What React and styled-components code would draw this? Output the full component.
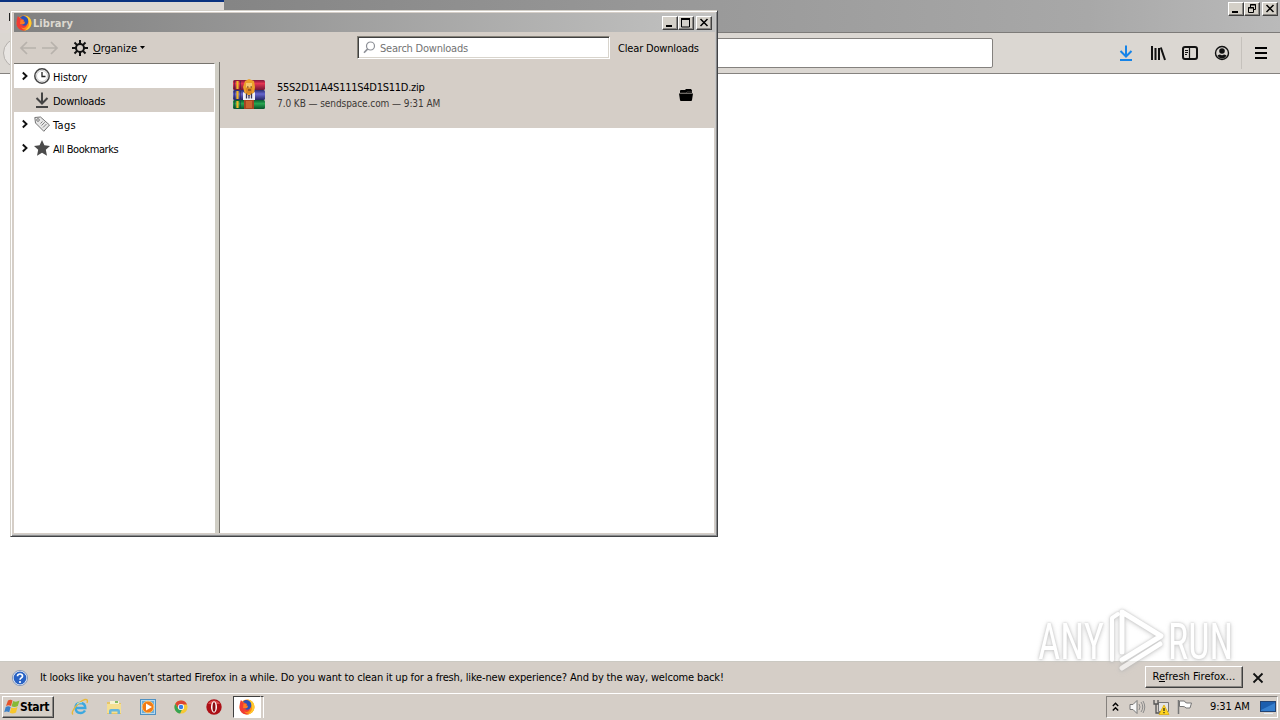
import React from "react";
import styled, { createGlobalStyle } from "styled-components";

const Global = createGlobalStyle`
  * { box-sizing: border-box; }
  body { margin: 0; overflow: hidden; background: #fff; }
  svg { display: block; flex: none; overflow: visible; }
`;

const face = "#d5cec7";

const Desktop = styled.div`
  position: relative;
  width: 1280px;
  height: 720px;
  display: flex;
  flex-direction: column;
  overflow: hidden;
  background: #fff;
  color: #000;
  font: 11px/14px "DejaVu Sans Condensed", "DejaVu Sans", sans-serif;
  font-stretch: condensed;
`;

const Label = styled.span`
  display: block;
  white-space: nowrap;
  padding-top: ${(p) => p.$drop ?? 0}px;
  letter-spacing: ${(p) => p.$ls ?? -0.3}px;
  font-size: ${(p) => p.$size ?? 11}px;
  color: ${(p) => p.$color ?? "#000"};
  font-weight: ${(p) => (p.$bold ? 700 : 400)};
`;

/* ---------- browser chrome ---------- */
const TabStrip = styled.div`
  height: 33px;
  flex: none;
  display: flex;
  justify-content: space-between;
  border-bottom: 1px solid #7d7b79;
  background: linear-gradient(90deg, #858585 18%, #979797 50%, #a8a8a8 85%, #bababa);
`;
const Tab = styled.div`
  width: 224px;
  height: 33px;
  border-top: 2px solid #0a3180;
  background: #dcd7d4;
  padding: 11px 0 0 9px;
`;
const TabMark = styled.div`
  width: 1px;
  height: 8px;
  background: #222;
`;
const Caption = styled.div`
  display: flex;
  padding: ${(p) => p.$pad ?? "0"};
`;
const CaptionButton = styled.div`
  width: 16px;
  height: 14px;
  margin-left: ${(p) => p.$gap ?? 0}px;
  background: #d4d0c8;
  border: 1px solid;
  border-color: #fff #404040 #404040 #fff;
  box-shadow: inset -1px -1px #8b8884;
`;
const NavBar = styled.div`
  height: 41px;
  flex: none;
  display: flex;
  align-items: center;
  border-bottom: 1px solid #85827f;
  background: #dbd7d2;
`;
const BackCircle = styled.div`
  width: 30px;
  height: 30px;
  margin-left: 3px;
  border: 1px solid #b5b1ad;
  border-radius: 50%;
  background: #e8e5e2;
`;
const UrlBar = styled.div`
  width: 760px;
  height: 30px;
  margin-left: 200px;
  background: #fff;
  border: 1px solid #84817e;
  border-radius: 2px;
`;
const NavIcons = styled.div`
  display: flex;
  align-items: center;
  margin-left: 125px;
  gap: 16px;
`;
const NavDivider = styled.div`
  width: 1px;
  height: 32px;
  margin: 0 12px 0 11px;
  background: #c5c1bc;
`;
const Page = styled.div`
  flex: 1;
  background: #fff;
`;
const Notice = styled.div`
  height: 32px;
  flex: none;
  display: flex;
  align-items: center;
  padding-left: 12px;
  background: ${face};
  border-top: 1px solid #cbc9c2;
`;
const NoticeText = styled.div`
  margin-left: 12px;
  width: 1105px;
`;
const RefreshButton = styled.div`
  width: 98px;
  height: 22px;
  margin: -2px 10px 0 0;
  display: flex;
  align-items: center;
  justify-content: center;
  border: 1px solid;
  border-color: #fff #404040 #404040 #fff;
  box-shadow: inset -1px -1px #8b8884;
`;

/* ---------- taskbar ---------- */
const TaskBar = styled.div`
  height: 27px;
  flex: none;
  display: flex;
  align-items: center;
  padding: 0 2px;
  background: ${face};
  border-top: 1px solid #fff;
`;
const StartButton = styled.div`
  width: 52px;
  height: 22px;
  display: flex;
  align-items: center;
  gap: 0;
  padding: 0 0 1px 1px;
  border: 1px solid;
  border-color: #fff #404040 #404040 #fff;
  box-shadow: inset -1px -1px #8b8884;
`;
const QuickLaunch = styled.div`
  display: flex;
  align-items: center;
  gap: 17px;
  margin-left: 17px;
`;
const ActiveTask = styled.div`
  width: 28px;
  height: 22px;
  display: flex;
  align-items: center;
  justify-content: center;
  margin-left: 11px;
  border: 1px solid;
  border-color: #404040 #fff #fff #404040;
  background: #fff;
`;
const TaskStack = styled.div`
  width: 3px;
  height: 22px;
  border-top: 1px solid #404040;
  border-right: 1px solid #fff;
`;
const Tray = styled.div`
  width: 172px;
  height: 22px;
  margin-left: auto;
  display: flex;
  align-items: center;
  padding-left: 5px;
  border: 1px solid;
  border-color: #85817d #fff #fff #85817d;
`;
const TrayItem = styled.div`
  margin-left: ${(p) => p.$gap}px;
  display: flex;
`;

/* ---------- library window ---------- */
const LibraryWindow = styled.div`
  position: absolute;
  left: 10px;
  top: 10px;
  width: 708px;
  height: 527px;
  display: flex;
  flex-direction: column;
  padding: 2px;
  background: ${face};
  border: 1px solid;
  border-color: #d4d0c8 #404246 #404246 #d4d0c8;
  box-shadow: inset 1px 1px #fff, inset -1px -1px #8b8b8b, inset -2px -2px #c8c8c8;
`;
const TitleBar = styled.div`
  height: 19px;
  flex: none;
  display: flex;
  align-items: center;
  padding: 1px 3px 0 2px;
  margin: 0 0 0 1px;
  background: linear-gradient(90deg, #808080, #c2c2c1);
`;
const TitleText = styled.div`
  flex: 1;
  margin-left: 1px;
`;
const LibraryToolbar = styled.div`
  height: 30px;
  flex: none;
  display: flex;
  align-items: center;
  padding: 1px 0 0 7px;
`;
const OrganizeMenu = styled.div`
  display: flex;
  align-items: center;
  width: 277px;
  margin-left: 14px;
`;
const OrganizeText = styled.div`
  width: 44px;
  margin: 0 3px 0 5px;
`;
const SearchBox = styled.div`
  width: 253px;
  height: 23px;
  display: flex;
  align-items: center;
  gap: 4px;
  margin-left: 8px;
  padding-left: 5px;
  background: #fff;
  border: 1px solid;
  border-color: #858178 #fff #fff #858178;
  box-shadow: inset 1px 1px #404040, inset -1px -1px #d8d4cc;
`;
const ClearButton = styled.div`
  margin-left: 8px;
`;
const LibraryBody = styled.div`
  height: 471px;
  display: flex;
  padding: 0 1px 0 1px;
`;
const Sidebar = styled.div`
  width: 201px;
  background: #fff;
  border-top: 1px solid #77746e;
  border-right: 1px solid #fff;
  margin-top: 1px;
`;
const SideRow = styled.div`
  height: 24px;
  display: flex;
  align-items: center;
  padding-left: 8px;
  background: ${(p) => (p.$active ? face : "#fff")};
`;
const Chevron = styled.div`
  width: 12px;
  display: flex;
`;
const SideIcon = styled.div`
  width: 16px;
  margin-right: 3px;
`;
const Splitter = styled.div`
  width: 5px;
  background: #d0cec5;
  border-right: 1px solid #77746e;
`;
const DownloadsPane = styled.div`
  flex: 1;
  background: #fff;
`;
const DownloadRow = styled.div`
  height: 66px;
  display: flex;
  align-items: center;
  padding-left: 13px;
  background: ${face};
`;
const FileInfo = styled.div`
  display: flex;
  flex-direction: column;
  gap: 2px;
  margin: 2px 0 0 12px;
  width: 402px;
  line-height: 14px;
`;
const Watermark = styled.div`
  position: absolute;
  left: 1036px;
  top: 606px;
  filter: drop-shadow(0 0 1px #aaa) drop-shadow(0 1px 2px #bbb);
  opacity: 0.65;
`;

/* ---------- icons ---------- */
const Min = () => (
  <svg width="14" height="12"><rect x="3" y="8" width="6" height="2" /></svg>
);
const Max = () => (
  <svg width="14" height="12" fill="none" stroke="#000"><path d="M2 1.500h9M2.500 1v9h8V1M2 2.500h9" /></svg>
);
const Restore = () => (
  <svg width="14" height="12" fill="none" stroke="#000"><path d="M5.500 4V1.500h5v5H9M5 2h6M3.500 4.500h5v5h-5zM3 5h6" /></svg>
);
const Close = () => (
  <svg width="14" height="12" stroke="#000" strokeWidth="1.500"><path d="M3.500 2l7 7M10.500 2l-7 7" /></svg>
);

const Firefox = ({ size = 16 }) => (
  <svg width={size} height={size} viewBox="0 0 16 16">
    <circle cx="8" cy="8" r="7.500" fill="#ff8a16" />
    <path d="M8 .5c5 0 8 4 7.400 8.500-.8 4-4 6.500-7.400 6.500 4-2 6-5 4.500-9C12 4 10 2 8 .5z" fill="#ffcb2d" />
    <path d="M.7 6C1 3.500 1.500 2 2 1l2 2.500L8 5l-1 3 4 2c-1 3-4 4-6 2 1 2 3 3.500 6 2.500C7 17 1 14.500.6 9z" fill="#f03b35" />
    <path d="M4 3c2-3 6-2.500 8 1 .8 3 0 5.500-2.500 6.500-2.500.7-4.500-1-4.500-2.500l3 .5 1-1.500-2-1L8 5z" fill="#2b50b8" />
    <path d="M4.500 4.500L8 5.200 7 7l2 1-2 1.500L4 9z" fill="#ff7a22" />
  </svg>
);

const Gear = () => (
  <svg width="16" height="16" viewBox="0 0 16 16" fill="none" stroke="#111">
    <circle cx="8" cy="8" r="4" strokeWidth="2" />
    <path strokeWidth="2" d="M8 0v4M8 12v4M0 8h4M12 8h4M2.500 2.500l2.400 2.400M11.100 11.100l2.400 2.400M13.500 2.500l-2.400 2.400M4.900 11.100l-2.400 2.400" />
  </svg>
);

const NavArrow = ({ flip }) => (
  <svg width="16" height="16" viewBox="0 0 16 16" fill="none" stroke="#b7b2ac" strokeWidth="1.700" transform={flip ? "scale(-1,1)" : undefined}>
    <path d="M1 8h15M7 2L1 8l6 6" />
  </svg>
);

const WinRar = () => (
  <svg width="32" height="32" viewBox="0 0 32 32">
    <defs>
      <linearGradient id="r" x2="0" y2="1"><stop stopColor="#7f1639" /><stop offset=".35" stopColor="#e53452" /><stop offset="1" stopColor="#721635" /></linearGradient>
      <linearGradient id="b" x2="0" y2="1"><stop stopColor="#292b70" /><stop offset=".4" stopColor="#6767ce" /><stop offset="1" stopColor="#252866" /></linearGradient>
      <linearGradient id="g" x2="0" y2="1"><stop stopColor="#075a30" /><stop offset=".4" stopColor="#29a651" /><stop offset="1" stopColor="#07512a" /></linearGradient>
    </defs>
    <rect x="0" y="1" width="32" height="10" rx="1.500" fill="url(#r)" />
    <rect x="0" y="11" width="32" height="10" rx="1.500" fill="url(#b)" />
    <rect x="0" y="21" width="32" height="9" rx="1.500" fill="url(#g)" />
    <path d="M4.500 2v8M4.500 12v8M4.500 22v7" stroke="#efb629" strokeWidth="2.200" />
    <path d="M1.500 2v8M1.500 12v8M1.500 22v7M7.500 2v8M7.500 12v8M7.500 22v7" stroke="#262044" strokeOpacity=".5" />
    <path d="M10 8l2-6 4-2 5 2 1 6-1 8h-9z" fill="#eba12b" />
    <path d="M13 4h6v4l-3 2-3-2z" fill="#f6c86e" />
    <path d="M12.500 9.500q3.500-2 7 0l-1 5h-5z" fill="#d98522" />
    <path d="M14 8h1.500M17.500 8H19M15 11h3" stroke="#5a2b15" />
    <path d="M10 13l3 2 3 2 3-2 3-2v8H10z" fill="#eef0f6" />
    <path d="M13.500 14.500v5M18.500 14.500v5M16 16v3.500" fill="none" stroke="#3d3553" strokeWidth="1.300" />
    <path d="M11 21h10v9H11z" fill="#a94322" /><path d="M13 22h6v7h-6z" fill="#ca6430" />
  </svg>
);

const Folder = () => (
  <svg width="14" height="14" viewBox="0 0 14 14">
    <path d="M1 4V2.500L2 2h4l1-1h5l1 1.500V5H1z" /><path d="M0 5.500h14L13 12q0 1-1 1H2q-1 0-1-1z" />
    <path d="M1 5h6l1-1h5" fill="none" stroke="#77716c" strokeWidth=".6" />
  </svg>
);

const SideChevron = () => (
  <svg width="6" height="8" viewBox="0 0 6 8" fill="none" stroke="#111" strokeWidth="1.900"><path d="M.8 .5L4.500 4 .8 7.500" /></svg>
);
const Clock = () => (
  <svg width="16" height="16" viewBox="0 0 16 16" fill="none" stroke="#444">
    <circle cx="8" cy="8" r="7.200" fill="#fff" strokeWidth="1.500" /><circle cx="8" cy="8" r="5.500" stroke="#c8c8c8" /><path d="M8 4v4.500h3.500" strokeWidth="1.300" stroke="#222" />
  </svg>
);
const DownArrow = ({ color = "#444", size = 16 }) => (
  <svg width={size} height={size} viewBox="0 0 16 16" fill="none" stroke={color} strokeWidth="2"><path d="M8 .5V11M2.500 6L8 11.500 13.500 6M2 15h12" /></svg>
);
const TagIcon = () => (
  <svg width="16" height="16" viewBox="0 0 16 16" fill="#e7e7e7" stroke="#747474">
    <path d="M.8 1.500L6.500 1l9 8-5.700 6.300L1.500 7z" /><circle cx="4" cy="4" r="1.300" fill="#fff" /><path d="M6.500 7.500l2-2M7.500 9.500l3.200-3.200M9 11.500l3.500-3.500" strokeWidth=".9" />
  </svg>
);
const Star = () => (
  <svg width="16" height="16" viewBox="0 0 16 16" fill="#4b4b4b"><path d="M8 0l2.400 5.300 5.600.6-4.200 3.900 1.200 6L8 12.800 3 15.800l1.200-6L0 5.900l5.600-.6z" /></svg>
);

const LibraryIcon = () => (
  <svg width="16" height="16" viewBox="0 0 16 16" stroke="#111" strokeWidth="2"><path d="M2 1v14M5.500 3v12M9 3v12" /><path d="M10.800 2.500l4.200 12.500" /></svg>
);
const SidebarIcon = () => (
  <svg width="16" height="16" viewBox="0 0 16 16" fill="none" stroke="#111"><rect x="1" y="2" width="14" height="12" rx="2" strokeWidth="2" /><path d="M7.500 2v12" strokeWidth="1.200" /><path d="M3 5.500h3M3 7.500h3M3 9.500h2" /></svg>
);
const Account = () => (
  <svg width="16" height="16" viewBox="0 0 16 16"><circle cx="8" cy="8" r="6.500" fill="none" stroke="#111" strokeWidth="1.400" /><circle cx="8" cy="6" r="2.800" fill="#111" /><path d="M3.500 10.500q1.500-1 2.500-1 2 1.500 4 0 1 0 2.500 1-1.500 3-4.500 3t-4.500-3z" fill="#111" /></svg>
);
const Burger = () => (
  <svg width="14" height="14" viewBox="0 0 14 14" stroke="#000" strokeWidth="2"><path d="M1 2h12M1 7h12M1 12h12" /></svg>
);

const Help = () => (
  <svg width="16" height="16" viewBox="0 0 16 16">
    <circle cx="8" cy="8" r="7" fill="#2862c4" stroke="#e9edf5" strokeWidth="1.200" /><circle cx="8" cy="8" r="7.600" fill="none" stroke="#6480ad" strokeWidth=".7" />
    <path d="M5.500 6.300Q5.500 4 8 4t2.500 2.200C10.500 8 8 7.800 8 9.700" fill="none" stroke="#fff" strokeWidth="1.700" /><circle cx="8" cy="12" r="1.100" fill="#fff" />
  </svg>
);
const WindowsLogo = () => (
  <svg width="16" height="16" viewBox="0 0 16 16">
    <path d="M4 1.500q2.500-1.500 4.500 0L7 7Q4.500 5.500 2 7z" fill="#e6532a" /><path d="M9.200 2q3 1.500 6.300-.5L13.800 7q-3.300 1.700-6.200.3z" fill="#86b936" />
    <path d="M1.700 8q2.500-1.500 5 0L5.200 13.300q-2.500-1.500-5 0z" fill="#3c80c8" /><path d="M7.300 8.400q3 1.500 6.200-.3L12 13.500q-3.300 1.700-6.200.3z" fill="#f8c62c" />
  </svg>
);
const Explorer = () => (
  <svg width="18" height="18" viewBox="0 0 18 18" fill="none">
    <path d="M14 12.500Q12.500 15 9.500 15 4.500 15 4.500 9.800 4.500 5 9.500 5q4.800.3 4.800 5H5.500" stroke="#3ca8df" strokeWidth="2.400" />
    <path d="M2 16.500C-1 14 8 3 14 1.500q3.500-.5 2 3.500" stroke="#e8b838" strokeWidth="1.400" /><path d="M6 6q2-2 5-1.300" stroke="#a2e2fa" />
  </svg>
);
const FolderTask = () => (
  <svg width="17" height="16" viewBox="0 0 17 16"><path d="M1 3h5l1 1h8v11H1z" fill="#e7c669" /><path d="M4 2h9v7H4z" fill="#f8f3d3" /><path d="M1 5h14v9H1z" fill="#f5df91" /><path d="M3 15v-3q0-2 2-2h7q2 0 2 2v3h-2.500v-2.500h-6V15z" fill="#66b6de" /><path d="M9 3h3" stroke="#61a83d" strokeWidth="1.500" /></svg>
);
const Media = () => (
  <svg width="16" height="16" viewBox="0 0 16 16"><rect x=".5" y=".5" width="15" height="15" fill="#b6d9f0" stroke="#4f91c2" /><rect x="2" y="2" width="12" height="12" fill="#6eaed8" /><circle cx="8" cy="8" r="5.800" fill="#f27b16" stroke="#fbbb62" /><path d="M6 4.500v7L12 8z" fill="#fff" /></svg>
);
const Chrome = () => (
  <svg width="16" height="14" viewBox="0 0 16 16"><circle cx="8" cy="8" r="7.500" fill="#f6c934" /><path d="M1.500 4.200A7.500 7.500 0 0 1 14.800 5H8L5 10z" fill="#dc4434" /><path d="M1.500 4.200l3.700 6.300L9 11l-2 4.500A7.500 7.500 0 0 1 1.500 4.200z" fill="#35a354" /><circle cx="8" cy="8" r="3.500" fill="#fff" /><circle cx="8" cy="8" r="2.600" fill="#397fe6" /></svg>
);
const Opera = () => (
  <svg width="16" height="16" viewBox="0 0 16 16"><circle cx="8" cy="8" r="7.700" fill="#ad1017" /><path d="M2 5a7 7 0 0 1 12 0" fill="#da4a4b" /><ellipse cx="8" cy="8" rx="3" ry="5.700" fill="#fff" /><ellipse cx="8" cy="8" rx="1.500" ry="4.800" fill="#8b0c12" /></svg>
);

const TrayChevrons = () => (
  <svg width="7" height="10" viewBox="0 0 7 10" fill="none" stroke="#000" strokeWidth="1.400"><path d="M.8 4l2.700-2.700L6.200 4M.8 8.500l2.700-2.700 2.700 2.700" /></svg>
);
const Speaker = () => (
  <svg width="16" height="16" viewBox="0 0 16 16" fill="none" stroke="#777"><path d="M1 5.500h3l4-4v13l-4-4H1z" fill="#f7f7f7" /><path d="M10 5q2 3 0 6M12 3q3.500 5 0 10M14 2q3.500 6 0 12" stroke="#8b8b8b" /></svg>
);
const Network = () => (
  <svg width="16" height="16" viewBox="0 0 16 16"><path d="M5.500 3.500h10v9h-10z" fill="#e4e4e4" stroke="#777" /><path d="M1 1v4h4V1M3 5v9h5" fill="none" stroke="#555" strokeWidth="1.300" /><path d="M11 6l5 9.500H6z" fill="#ffd51f" stroke="#d9a600" strokeWidth=".7" /><path d="M11 9v3M11 13v1.300" stroke="#222" strokeWidth="1.200" /></svg>
);
const Flag = () => (
  <svg width="16" height="16" viewBox="0 0 16 16"><path d="M2.500 2h5q.5 2 2.500 2h4.500l-1.500 5h-4q-1-1.500-3-1.500h-3.500z" fill="#fff" stroke="#777" /><path d="M1.500 1v14" stroke="#777" strokeWidth="1.500" /></svg>
);
const Monitor = () => (
  <svg width="16" height="13" viewBox="0 0 16 13"><rect x=".5" y=".5" width="15" height="10" fill="#1c5eae" stroke="#234372" /><path d="M1 9L15 2v8H1z" fill="#367fce" /><path d="M4 12.500h9" stroke="#e6edf5" /></svg>
);

const treeItems = [
  { name: "History", icon: <Clock />, open: true, ls: -0.15 },
  { name: "Downloads", icon: <DownArrow />, active: true, ls: -0.25 },
  { name: "Tags", icon: <TagIcon />, open: true, ls: 0.3 },
  { name: "All Bookmarks", icon: <Star />, open: true, ls: -0.42 },
];

export default function App() {
  return (
    <Desktop>
      <Global />
      <TabStrip>
        <Tab><TabMark /></Tab>
        <Caption $pad="2px 2px 0 0">
          <CaptionButton><Min /></CaptionButton>
          <CaptionButton><Restore /></CaptionButton>
          <CaptionButton $gap={2}><Close /></CaptionButton>
        </Caption>
      </TabStrip>
      <NavBar>
        <BackCircle />
        <UrlBar />
        <NavIcons>
          <DownArrow color="#1583e8" />
          <LibraryIcon />
          <SidebarIcon />
          <Account />
        </NavIcons>
        <NavDivider />
        <Burger />
      </NavBar>
      <Page />
      <Notice>
        <Help />
        <NoticeText>
          <Label $ls={-0.15}>It looks like you haven’t started Firefox in a while. Do you want to clean it up for a fresh, like-new experience? And by the way, welcome back!</Label>
        </NoticeText>
        <RefreshButton><Label $ls={0}>R<u>e</u>fresh Firefox…</Label></RefreshButton>
        <svg width="10" height="10" viewBox="0 0 10 10" stroke="#111" strokeWidth="1.800"><path d="M.5.5l9 9M9.500.5l-9 9" /></svg>
      </Notice>
      <TaskBar>
        <StartButton><WindowsLogo /><Label $bold $size={12} $ls={-0.3}>Start</Label></StartButton>
        <QuickLaunch><Explorer /><FolderTask /><Media /><Chrome /><Opera /></QuickLaunch>
        <ActiveTask><Firefox /></ActiveTask>
        <TaskStack />
        <Tray>
          <TrayChevrons />
          <TrayItem $gap={10}><Speaker /></TrayItem>
          <TrayItem $gap={8}><Network /></TrayItem>
          <TrayItem $gap={8}><Flag /></TrayItem>
          <TrayItem $gap={17}><Label $ls={-0.15}>9:31 AM</Label></TrayItem>
          <TrayItem $gap={10}><Monitor /></TrayItem>
        </Tray>
      </TaskBar>

      <LibraryWindow>
        <TitleBar>
          <Firefox />
          <TitleText><Label $bold $drop={1} $color="#dcd8d0" $ls={0.05}>Library</Label></TitleText>
          <Caption>
            <CaptionButton><Min /></CaptionButton>
            <CaptionButton><Max /></CaptionButton>
            <CaptionButton $gap={2}><Close /></CaptionButton>
          </Caption>
        </TitleBar>
        <LibraryToolbar>
          <NavArrow />
          <svg width="6" height="1" />
          <NavArrow flip />
          <OrganizeMenu>
            <Gear />
            <OrganizeText><Label $drop={2} $ls={-0.05}><u>O</u>rganize</Label></OrganizeText>
            <svg width="5" height="3"><path d="M0 0h5L2.500 3z" /></svg>
          </OrganizeMenu>
          <SearchBox>
            <svg width="13" height="13" viewBox="0 0 13 13" fill="none" stroke="#8d9097" strokeWidth="1.200"><circle cx="7.500" cy="5" r="4" /><path d="M4.700 7.900L1 11.800" strokeWidth="1.600" /></svg>
            <Label $drop={2} $color="#737373" $ls={-0.22}>Search Downloads</Label>
          </SearchBox>
          <ClearButton><Label $drop={2} $ls={-0.17}>Clear Downloads</Label></ClearButton>
        </LibraryToolbar>
        <LibraryBody>
          <Sidebar>
            {treeItems.map((t) => (
              <SideRow key={t.name} $active={t.active}>
                <Chevron>{t.open && <SideChevron />}</Chevron>
                <SideIcon>{t.icon}</SideIcon>
                <Label $drop={3} $ls={t.ls}>{t.name}</Label>
              </SideRow>
            ))}
          </Sidebar>
          <Splitter />
          <DownloadsPane>
            <DownloadRow>
              <WinRar />
              <FileInfo>
                <Label $ls={-0.26}>55S2D11A4S111S4D1S11D.zip</Label>
                <Label $size={10} $ls={-0.08} $color="#3c3836">7.0 KB — sendspace.com — 9:31 AM</Label>
              </FileInfo>
              <Folder />
            </DownloadRow>
          </DownloadsPane>
        </LibraryBody>
      </LibraryWindow>

      <Watermark>
        <svg width="200" height="70" fill="#fff">
          <g fontFamily="Roboto, sans-serif" fontWeight="400" fontSize="50">
            <text x="2" y="53" textLength="66" lengthAdjust="spacingAndGlyphs">ANY</text>
            <text x="132" y="53" textLength="65" lengthAdjust="spacingAndGlyphs">RUN</text>
          </g>
          <g fill="none" stroke="#fff" strokeLinejoin="round" strokeLinecap="round">
            <path d="M86 46V6L125 30 86 54" strokeWidth="5" />
            <path d="M76 54V12l6-4" strokeWidth="4" />
            <path d="M86 62L124 38" strokeWidth="5" />
          </g>
        </svg>
      </Watermark>
    </Desktop>
  );
}
